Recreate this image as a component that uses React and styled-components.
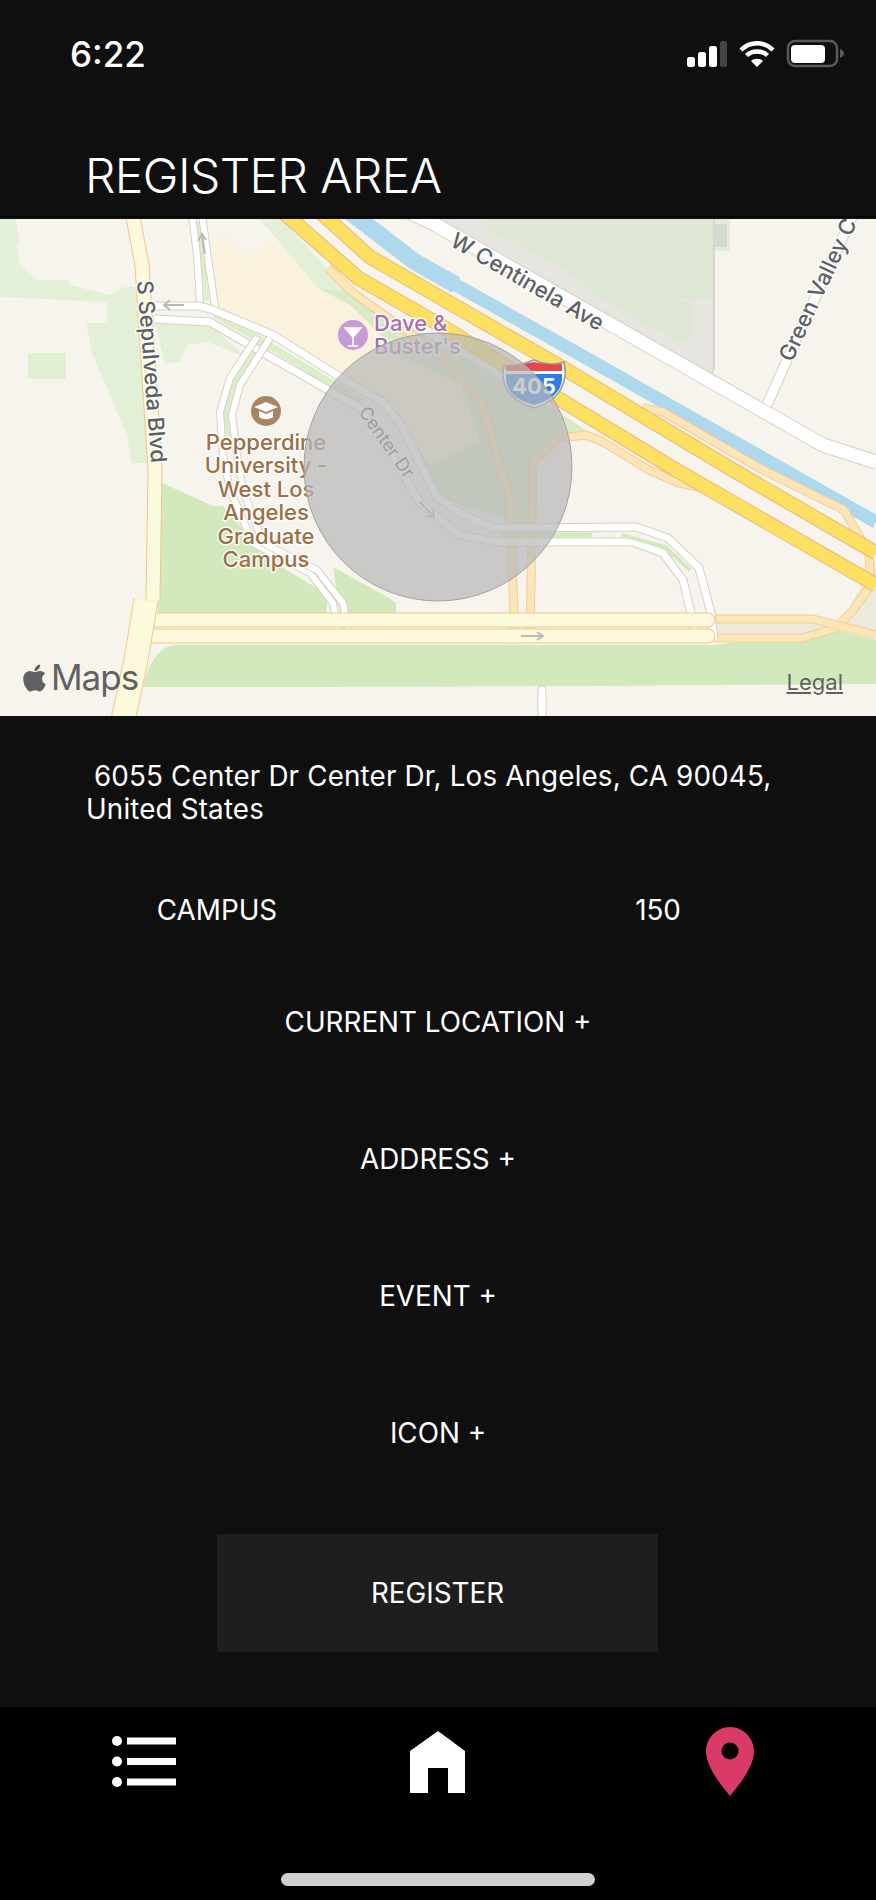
import React from 'react';
import styled, { createGlobalStyle } from 'styled-components';

const GlobalStyle = createGlobalStyle`
  html, body {
    margin: 0;
    padding: 0;
    background: #0f0f0f;
  }
`;

const Screen = styled.div`
  width: 876px;
  height: 1900px;
  display: flex;
  flex-direction: column;
  overflow: hidden;
  background: #0f0f0f;
  color: #fff;
  font-family: Inter, 'Liberation Sans', sans-serif;
`;

const Header = styled.header`
  height: 217px;
  flex: none;
  box-sizing: border-box;
  border-bottom: 1px solid #000;
  padding: 39px 31px 0 70px;
  display: flex;
  flex-direction: column;
`;

const StatusBar = styled.div`
  display: flex;
  justify-content: space-between;
  align-items: flex-start;
  height: 30px;
`;

const Clock = styled.div`
  font-size: 35px;
  line-height: 30px;
  font-weight: 500;
`;

const Title = styled.h1`
  margin: 82px 0 0 15px;
  font-size: 48px;
  line-height: 50px;
  font-weight: 300;
  letter-spacing: -0.6px;
`;

const MapBox = styled.div`
  position: relative;
  height: 497px;
  margin-top: 2px;
  flex: none;
  background: #f7f4ed;
  overflow: hidden;

  svg.map {
    display: block;
  }
`;

const MapsMark = styled.div`
  position: absolute;
  left: 23px;
  bottom: 24px;
  display: flex;
  align-items: flex-end;
  gap: 5px;
  color: #616161;
  font-size: 35px;
  line-height: 30px;
  font-weight: 400;
  letter-spacing: -1px;
`;

const Legal = styled.a`
  position: absolute;
  right: 33px;
  bottom: 22px;
  color: #616161;
  font-size: 22px;
  line-height: 24px;
  text-decoration: underline;
`;

const MapText = styled.text`
  font-family: Inter, 'Liberation Sans', sans-serif;
  font-size: ${({ $size }) => $size}px;
  font-weight: ${({ $weight }) => $weight || 500};
  fill: ${({ $color }) => $color};
  stroke: #fff;
  stroke-opacity: 0.85;
  stroke-width: 3px;
  paint-order: stroke;
  stroke-linejoin: round;
  text-anchor: ${({ $anchor }) => $anchor || 'start'};
`;

const ShieldText = styled.text`
  font-family: Inter, 'Liberation Sans', sans-serif;
  font-size: 22px;
  font-weight: 700;
  fill: #fff;
  text-anchor: middle;
`;

const Content = styled.main`
  flex: 1;
  display: flex;
  flex-direction: column;
  font-size: 27.8px;
  font-weight: 400;
`;

const Address = styled.p`
  margin: 44px 0 0;
  padding: 0 86px;
  line-height: 33px;
  letter-spacing: 0.15px;
`;

const InfoRow = styled.div`
  display: grid;
  grid-template-columns: 434px 1fr;
  gap: 6px;
  margin-top: 67px;
  line-height: 34px;
  text-align: center;
`;

const ActionRow = styled.div`
  height: 137px;
  display: flex;
  align-items: center;
  justify-content: center;
`;

const Actions = styled.div`
  margin-top: 26px;
  display: flex;
  flex-direction: column;
`;

const RegisterButton = styled.button`
  display: block;
  width: 441px;
  height: 118px;
  margin: 33px 0 0 217px;
  border: 0;
  background: #1e1e1e;
  color: #fff;
  font: inherit;
`;

const TabBar = styled.nav`
  height: 193px;
  flex: none;
  background: #000;
  display: flex;
  flex-direction: column;
`;

const Tabs = styled.div`
  display: grid;
  grid-template-columns: repeat(3, 1fr);
  height: 166px;
  padding-top: 20px;
  box-sizing: border-box;
`;

const Tab = styled.div`
  display: flex;
  justify-content: center;
  align-items: flex-start;
`;

const TabIcon = styled.svg`
  margin-top: ${({ $top }) => $top || 0}px;
  margin-left: ${({ $left }) => $left || 0}px;
`;

const HomeIndicator = styled.div`
  width: 314px;
  height: 13px;
  margin: 0 auto;
  border-radius: 7px;
  background: #cfcfcf;
`;

const Road = ({ points, width, fill, edge, cap = 'butt' }) => (
  <>
    <polyline points={points} fill="none" stroke={edge} strokeWidth={width + 2} strokeLinejoin="round" strokeLinecap={cap} />
    <polyline points={points} fill="none" stroke={fill} strokeWidth={width} strokeLinejoin="round" strokeLinecap={cap} />
  </>
);

const WHITE = { fill: '#fff', edge: '#d6d1c6' };
const RAMP = { fill: '#fce5b6', edge: '#f3cc97' };
const ARTERIAL = { fill: '#fdf9dc', edge: '#f3c591' };
const FREEWAY = { fill: '#fce062', edge: '#eeb480' };

const Arrow = ({ d }) => <path d={d} fill="none" stroke="#b9b9b6" strokeWidth="2" />;

const MapArt = () => (
  <svg className="map" width="876" height="497" viewBox="0 219 876 497">
    <rect x="0" y="219" width="876" height="497" fill="#f7f4ed" />

    {/* parks */}
    <path d="M0 219H15L20 243L17 245L20 265L37 280H68L70 285L110 295L125 287H140L155 318L148 463H132L127 435L92 353L87 328V323H107V302L0 297Z" fill="#e3efd6" />
    <rect x="28" y="353" width="38" height="26" fill="#e0eed2" />
    <path d="M155 322L210 325L247 358L208 342L187 345L180 362L165 364Z" fill="#e3efd6" />
    <path d="M162 483L213 506H223L270 560L320 590L327 603V613H158V597Z" fill="#d1e9bd" />
    <path d="M333 567L396 602V613H340Z" fill="#d1e9bd" />
    <path d="M143 687C150 660 160 645 177 645H714L836 630L876 640V684L600 686L300 687Z" fill="#d1e9bd" />
    <path d="M714 622H813L860 630L836 628L803 634H714Z" fill="#edeadc" />
    <path d="M845 615L876 560V632L840 622Z" fill="#edeadc" />

    {/* grey lot above Centinela */}
    <path d="M395 219H712L714 368L711 376L436 221Z" fill="#e7e5e0" />
    <path d="M488 219H713V298L666 300L691 303V338L683 343L653 327L643 323L623 310L596 295L563 268L536 255L513 240L489 233Z" fill="#dee7d3" />
    <rect x="713" y="219" width="17" height="32" fill="#e3ebdf" />
    <rect x="715" y="224" width="12" height="23" fill="#d3dad0" />
    <path d="M714 219V368L711 376" fill="none" stroke="#d9d6cf" strokeWidth="2" />

    {/* campus ground */}
    <path d="M260 219H281L333 275L400 320L556 410L603 442L559 438L533 462L530 528L437 497L400 423L383 402L340 377L318 288Z" fill="#d8ebc6" />
    <path d="M260 219H281L333 275L352 292L318 288Z" fill="#e3efd6" />
    <path d="M212 243L226 235L247 258L273 238L318 288L350 305L403 357L460 383L480 440L430 465L400 423L383 402L340 377L273 335L218 307Z" fill="#faf2dc" />

    {/* water */}
    <polyline points="350,212 415,262 456,285" fill="none" stroke="#aed8ec" strokeWidth="17" />
    <polyline points="456,285 586,358 876,522" fill="none" stroke="#aed8ec" strokeWidth="13" />

    {/* ramps */}
    <Road points="328,268 352,292 437,353 482,402 510,500 515,643" width={7} {...RAMP} />
    <Road points="703,488 679,483 649,470 603,442 586,435 559,438 533,462 530,643" width={7} {...RAMP} />
    <Road points="643,408 663,412 763,470 844,510 869,553 871,585 853,610 836,628 803,638 714,638" width={7} {...RAMP} />
    <Road points="714,619 813,619 876,635" width={7} {...RAMP} />

    {/* freeway */}
    <Road points="283,212 358,278 440,325 556,397 676,470 876,585" width={13} {...FREEWAY} />
    <Road points="320,212 370,257 436,295 563,368 733,470 876,553" width={13} {...FREEWAY} />

    {/* campus loop */}
    <polyline points="215,314 260,340 330,382 362,402" stroke="#dcedc9" strokeWidth="7" fill="none" />
    <polyline points="263,340 235,381 226,414 230,450" stroke="#dcedc9" strokeWidth="5" fill="none" />
    <polyline points="197,222 202,255 207,300" stroke="#dcedc9" strokeWidth="4" fill="none" />
    <Road points="192,215 197,255 200,303" width={6} {...WHITE} />
    <Road points="202,215 208,258 215,307" width={6} {...WHITE} />
    <Road points="155,306 200,306 213,310 273,335 340,377 383,402 400,423 437,497 460,513 493,528 636,527 668,538 699,568 711,613 714,640" width={7} {...WHITE} />
    <Road points="155,319 210,322 253,347 323,387 360,408 397,463 420,503 460,535 497,542 633,542 663,553 683,580 691,613 698,640" width={7} {...WHITE} />
    <Road points="257,337 230,378 220,412 223,455 230,490 253,543 310,573 333,603 340,640" width={6} {...WHITE} />
    <Road points="270,338 240,385 232,415 237,455 243,490 263,543 317,570 343,603 350,640" width={6} {...WHITE} />
    <polyline points="500,535 592,535" stroke="#d1e9bd" strokeWidth="5" />
    <polyline points="622,535 665,547 690,570" stroke="#d1e9bd" strokeWidth="4" fill="none" />
    <Road points="542,690 542,730" width={7} {...WHITE} cap="round" />

    {/* arterials, cross street first so Sepulveda covers its west end */}
    <Road points="150,620 708,620" width={13} {...ARTERIAL} cap="round" />
    <Road points="150,636 708,636" width={13} {...ARTERIAL} cap="round" />
    <Road points="132,212 142,265 155,470 153,600" width={13} {...ARTERIAL} />
    <Road points="146,600 136,660 122,725" width={23} {...ARTERIAL} />

    {/* Centinela and Green Valley */}
    <Road points="764,412 786,362 862,195" width={9} {...WHITE} />
    <Road points="395,205 436,225 823,445 876,462" width={13} {...WHITE} />

    <Arrow d="M184 305H165M170 300L164 305L170 310" />
    <Arrow d="M205 254L202 235M198 241L202 234L206 240" />
    <Arrow d="M521 636H542M537 632L543 636L537 640" />
    <Arrow d="M420 502L433 516M426 516L434 517L433 509" />

    {/* labels */}
    <MapText $size={22} $color="#5d6064" transform="translate(137 281) rotate(85.5)">S Sepulveda Blvd</MapText>
    <MapText $size={22} $color="#5d6064" transform="translate(449 245) rotate(30)">W Centinela Ave</MapText>
    <MapText $size={22} $color="#5d6064" transform="translate(792 363) rotate(-65)">Green Valley C</MapText>
    <MapText $size={18} $weight={400} $color="#5a5a5a" transform="translate(358 412) rotate(55)">Center Dr</MapText>

    <circle cx="353" cy="335" r="15" fill="#c79bd3" />
    <path d="M345 328H361L353 337ZM353 337V346M348 346H358" fill="#fff" stroke="#fff" strokeWidth="1.5" />
    <MapText $size={22} $color="#a66fb0" x="374" y="331">Dave &amp;</MapText>
    <MapText $size={22} $color="#a66fb0" x="374" y="354">Buster's</MapText>

    <circle cx="266" cy="411" r="15" fill="#a98561" />
    <path d="M254 407L266 402L278 407L266 412ZM259 411V417C263 420 269 420 273 417V411L266 414Z" fill="#fff" />
    {['Pepperdine', 'University -', 'West Los', 'Angeles', 'Graduate', 'Campus'].map((line, i) => (
      <MapText key={line} $size={22} $color="#9c6f45" $anchor="middle" x="266" y={450 + i * 23.4}>{line}</MapText>
    ))}

    {/* interstate shield */}
    <path d="M504 366C515 366 525 364 534 360C543 364 553 366 564 362C568 380 562 400 534 408C506 400 500 380 504 366Z" fill="#fff" stroke="#8f96a3" strokeWidth="1.5" />
    <path d="M506 374H562C563 388 556 399 534 405C512 399 505 388 506 374Z" fill="#2b7de9" />
    <path d="M506 365C516 365 525 364 534 362C543 364 552 365 562 364V371H506Z" fill="#e8434f" />
    <ShieldText x="534" y="394">405</ShieldText>

    {/* registered radius */}
    <circle cx="438" cy="467" r="134" fill="rgba(184,184,184,0.72)" stroke="#a3a3a3" strokeWidth="1" />
  </svg>
);

const AppleGlyph = () => (
  <svg width="23" height="28" viewBox="0 30 384 452">
    <path
      fill="#616161"
      d="M318.7 268.7c-.2-36.7 16.4-64.4 50-84.8-18.8-26.9-47.2-41.7-84.7-44.6-35.5-2.8-74.3 20.7-88.5 20.7-15 0-49.4-19.7-76.4-19.7C63.3 141.2 4 184.8 4 273.5q0 39.3 14.4 81.2c12.8 36.7 59 126.7 107.2 125.2 25.2-.6 43-17.9 75.8-17.9 31.8 0 48.3 17.9 76.4 17.9 48.6-.7 90.4-82.5 102.6-119.3-65.2-30.7-61.7-90-61.7-91.9zm-56.6-164.2c27.3-32.4 24.8-61.9 24-72.5-24.1 1.4-52 16.4-67.9 34.9-17.5 19.8-27.8 44.3-25.6 71.9 26.1 2 49.9-11.4 69.5-34.3z"
    />
  </svg>
);

const StatusIcons = () => (
  <svg width="158" height="30" viewBox="687 39 158 30">
    <rect x="687" y="57" width="8" height="10" rx="2.5" fill="#fff" />
    <rect x="698" y="52" width="8" height="15" rx="2.5" fill="#fff" />
    <rect x="709" y="46" width="8" height="21" rx="2.5" fill="#fff" />
    <rect x="720" y="41" width="7" height="26" rx="2.5" fill="#444" />
    <path d="M741 50C750 41 764 41 773 50" fill="none" stroke="#fff" strokeWidth="4.5" />
    <path d="M746.5 55.5C752 50 762 50 767.5 55.5" fill="none" stroke="#fff" strokeWidth="4.5" />
    <path d="M751 61C754 58 760 58 763 61L757 67Z" fill="#fff" />
    <rect x="788" y="41" width="49" height="25" rx="7" fill="none" stroke="#5a5a5a" strokeWidth="2.5" />
    <rect x="791" y="45" width="34" height="18" rx="4" fill="#fff" />
    <path d="M840 49C843 50 844 52 844 53.500C844 55 843 57 840 58Z" fill="#5a5a5a" />
  </svg>
);

const ListIcon = () => (
  <TabIcon $top={8} $left={-4} width="64" height="52" viewBox="112 1735 64 52">
    {[1741, 1761.5, 1782].map(y => (
      <g key={y}>
        <circle cx="117" cy={y} r="5" fill="#fff" />
        <rect x="127" y={y - 3.5} width="49" height="7" fill="#fff" />
      </g>
    ))}
  </TabIcon>
);

const HomeIcon = () => (
  <TabIcon $top={4} $left={-1} width="55" height="62" viewBox="410 1731 55 62">
    <path d="M438 1731L465 1751V1793H448V1768H428V1793H410V1751Z" fill="#fff" />
  </TabIcon>
);

const PinIcon = () => (
  <TabIcon width="48" height="69" viewBox="707 1727 48 69">
    <path
      fillRule="evenodd"
      fill="#d93a68"
      d="M731 1727C744 1727 755 1738 755 1751C755 1767 740 1785 731 1796C722 1785 707 1767 707 1751C707 1738 718 1727 731 1727ZM731 1742.500A8.500 8.500 0 1 0 731 1759.500A8.500 8.500 0 1 0 731 1742.500Z"
    />
  </TabIcon>
);

export default function App() {
  return (
    <>
      <GlobalStyle />
      <Screen>
        <Header>
          <StatusBar>
            <Clock>6:22</Clock>
            <StatusIcons />
          </StatusBar>
          <Title>REGISTER AREA</Title>
        </Header>
        <MapBox>
          <MapArt />
          <MapsMark>
            <AppleGlyph />
            <span>Maps</span>
          </MapsMark>
          <Legal>Legal</Legal>
        </MapBox>
        <Content>
          <Address>
            &nbsp;6055 Center Dr Center Dr, Los Angeles, CA 90045, United States
          </Address>
          <InfoRow>
            <span>CAMPUS</span>
            <span>150</span>
          </InfoRow>
          <Actions>
            <ActionRow>CURRENT LOCATION +</ActionRow>
            <ActionRow>ADDRESS +</ActionRow>
            <ActionRow>EVENT +</ActionRow>
            <ActionRow>ICON +</ActionRow>
          </Actions>
          <RegisterButton>REGISTER</RegisterButton>
        </Content>
        <TabBar>
          <Tabs>
            <Tab><ListIcon /></Tab>
            <Tab><HomeIcon /></Tab>
            <Tab><PinIcon /></Tab>
          </Tabs>
          <HomeIndicator />
        </TabBar>
      </Screen>
    </>
  );
}
